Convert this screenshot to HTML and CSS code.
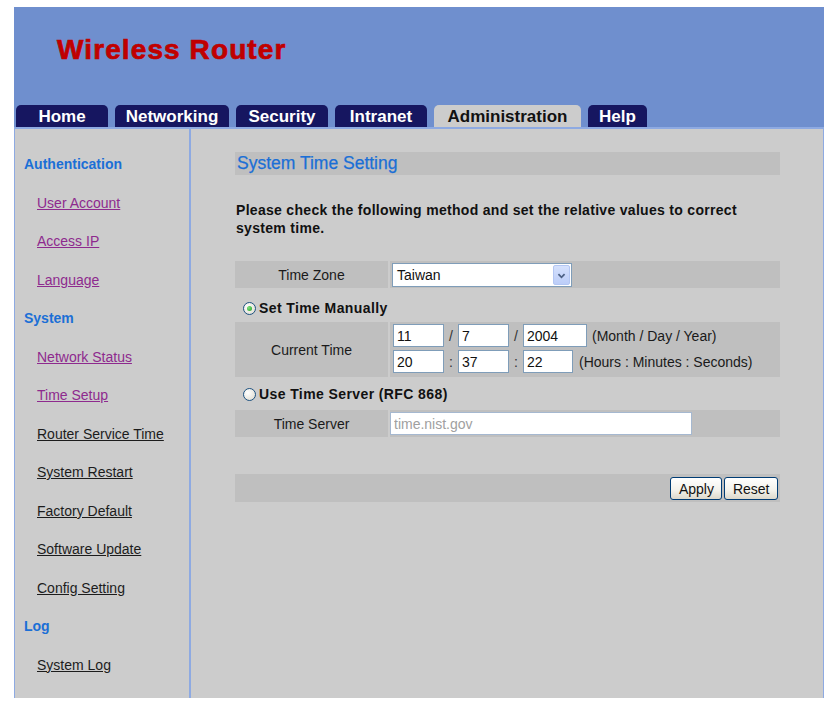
FILE: index.html
```html
<!DOCTYPE html>
<html lang="en">
<head>
<meta charset="utf-8">
<title>Wireless Router - System Time Setting</title>
<link rel="stylesheet" href="styles.css">
</head>
<body>
<div class="frame">
  <header class="header">
    <div class="brand">Wireless Router</div>
    <nav class="tabs">
      <a class="tab">Home</a>
      <a class="tab tab--wide">Networking</a>
      <a class="tab">Security</a>
      <a class="tab">Intranet</a>
      <a class="tab tab--admin tab--active">Administration</a>
      <a class="tab tab--help">Help</a>
    </nav>
  </header>
  <div class="body">
    <aside class="sidebar">
      <div class="nav-head">Authentication</div>
      <div class="nav-item"><a class="nav-link nav-link--visited">User Account</a></div>
      <div class="nav-item"><a class="nav-link nav-link--visited">Access IP</a></div>
      <div class="nav-item"><a class="nav-link nav-link--visited">Language</a></div>
      <div class="nav-head">System</div>
      <div class="nav-item"><a class="nav-link nav-link--visited">Network Status</a></div>
      <div class="nav-item"><a class="nav-link nav-link--visited">Time Setup</a></div>
      <div class="nav-item"><a class="nav-link">Router Service Time</a></div>
      <div class="nav-item"><a class="nav-link">System Restart</a></div>
      <div class="nav-item"><a class="nav-link">Factory Default</a></div>
      <div class="nav-item"><a class="nav-link">Software Update</a></div>
      <div class="nav-item"><a class="nav-link">Config Setting</a></div>
      <div class="nav-head">Log</div>
      <div class="nav-item"><a class="nav-link">System Log</a></div>
    </aside>
    <main class="main">
      <h1 class="section-title">System Time Setting</h1>
      <p class="intro">Please check the following method and set the relative values to correct system time.</p>

      <div class="form-row row-zone">
        <div class="label-cell">Time Zone</div>
        <div class="value-cell">
          <div class="select">
            <span class="select-text">Taiwan</span>
            <span class="select-btn">
              <svg width="17" height="21" viewBox="0 0 17 21"><path d="M5 9 L8.5 12.5 L12 9" fill="none" stroke="#4d6185" stroke-width="2"/></svg>
            </span>
          </div>
        </div>
      </div>

      <div class="radio-line radio-line--first"><span class="radio radio--on"></span>Set Time Manually</div>

      <div class="form-row row-time">
        <div class="label-cell">Current Time</div>
        <div class="value-cell value-cell--stack">
          <div class="time-line">
            <input class="field" type="text" value="11"><span class="sep">/</span><input class="field" type="text" value="7"><span class="sep">/</span><input class="field field--year" type="text" value="2004"><span class="hint">(Month / Day / Year)</span>
          </div>
          <div class="time-line">
            <input class="field" type="text" value="20"><span class="sep">:</span><input class="field" type="text" value="37"><span class="sep">:</span><input class="field field--sec" type="text" value="22"><span class="hint hint--time">(Hours : Minutes : Seconds)</span>
          </div>
        </div>
      </div>

      <div class="radio-line radio-line--second"><span class="radio"></span>Use Time Server (RFC 868)</div>

      <div class="form-row row-server">
        <div class="label-cell">Time Server</div>
        <div class="value-cell">
          <input class="field field--server" type="text" value="time.nist.gov" disabled>
        </div>
      </div>

      <div class="button-bar">
        <button class="btn" type="button">Apply</button>
        <button class="btn" type="button">Reset</button>
      </div>
    </main>
  </div>
</div>
</body>
</html>
```

FILE: styles.css
```css
body {
  margin: 0;
  background: #ffffff;
  font-family: "Liberation Sans", Arial, sans-serif;
}

.frame {
  margin: 7px 0 0 14px;
  width: 810px;
}

/* Header */
.header {
  height: 120px;
  background: #6f8fce;
  display: flex;
  flex-direction: column;
}

.brand {
  margin: 27px 0 0 43px;
  font-size: 28px;
  line-height: 32px;
  font-weight: bold;
  color: #c00000;
  letter-spacing: 1.1px;
  -webkit-text-stroke: 0.7px #c00000;
}

.tabs {
  margin-top: auto;
  display: flex;
  gap: 7px;
  padding-left: 2px;
  height: 22px;
}

.tab {
  width: 92px;
  height: 22px;
  box-sizing: border-box;
  padding-top: 2px;
  line-height: 20px;
  text-align: center;
  background: #161660;
  color: #ffffff;
  font-size: 17px;
  font-weight: bold;
  border-radius: 5px 5px 0 0;
  text-decoration: none;
}

.tab--wide { width: 114px; }
.tab--admin { width: 147px; }
.tab--help { width: 59px; }

.tab--active {
  background: #cccccc;
  color: #111111;
}

/* Body */
.body {
  display: flex;
  height: 569px;
  border-top: 2px solid #8eaae2;
}

.sidebar {
  width: 174px;
  background: #cccccc;
  border-left: 1px solid #8eaae2;
  border-right: 2px solid #8eaae2;
  padding-top: 16px;
}

.nav-head {
  height: 38.5px;
  line-height: 38.5px;
  padding-left: 9px;
  font-size: 14px;
  font-weight: bold;
  color: #1b6fd6;
}

.nav-item {
  height: 38.5px;
  line-height: 38.5px;
  padding-left: 22px;
  font-size: 14px;
}

.nav-link {
  color: #1c1c1c;
  text-decoration: underline;
}

.nav-link--visited {
  color: #8e2a8e;
}

.main {
  flex: 1;
  background: #cccccc;
  border-right: 1px solid #8eaae2;
  padding: 23px 43px 0 44px;
}

.section-title {
  margin: 0;
  height: 23px;
  line-height: 23px;
  padding-left: 2px;
  background: #bfbfbf;
  color: #1b6fd6;
  font-size: 17.5px;
  font-weight: normal;
  -webkit-text-stroke: 0.25px #1b6fd6;
}

.intro {
  margin: 26px 0 0;
  padding-left: 1px;
  font-size: 14px;
  line-height: 18px;
  font-weight: bold;
  letter-spacing: 0.3px;
  color: #111111;
}

/* Form rows */
.form-row {
  display: grid;
  grid-template-columns: 153px 1fr;
  column-gap: 2px;
}

.label-cell {
  background: #bfbfbf;
  display: flex;
  align-items: center;
  justify-content: center;
  font-size: 14px;
  color: #1a1a1a;
}

.value-cell {
  background: #bfbfbf;
  display: flex;
  align-items: flex-start;
  padding: 2px 0 0 2px;
}

.row-zone {
  margin-top: 24px;
  height: 27px;
}

.row-time {
  height: 55px;
}

.row-server {
  height: 27px;
}

.row-server .value-cell {
  padding-top: 2px;
  padding-left: 0;
}

.value-cell--stack {
  flex-direction: column;
  gap: 3px;
  padding-left: 3px;
}

.select {
  width: 180px;
  height: 24px;
  box-sizing: border-box;
  border: 1px solid #7f9db9;
  background: #ffffff;
  display: flex;
  align-items: center;
  justify-content: space-between;
  padding: 0 1px 0 4px;
}

.select-text {
  font-size: 14px;
  color: #111111;
}

.select-btn {
  width: 17px;
  height: 20px;
  box-sizing: border-box;
  border: 1px solid #b3c6f3;
  border-radius: 2px;
  background: linear-gradient(#d5e1fd, #bccdf8);
  display: flex;
  align-items: center;
  justify-content: center;
  overflow: hidden;
}

.radio-line {
  display: flex;
  align-items: center;
  height: 20px;
  padding-left: 8px;
  font-size: 14px;
  font-weight: bold;
  letter-spacing: 0.4px;
  color: #111111;
}

.radio-line--first {
  margin: 10px 0 4px;
}

.radio-line--second {
  margin: 7px 0 6px;
}

.radio {
  position: relative;
  width: 13px;
  height: 13px;
  box-sizing: border-box;
  border: 1px solid #1c5180;
  border-radius: 50%;
  background: radial-gradient(circle at 35% 35%, #ffffff, #dcd9cc);
  margin-right: 3px;
  flex: none;
}

.radio--on::after {
  content: "";
  position: absolute;
  left: 3px;
  top: 3px;
  width: 5px;
  height: 5px;
  border-radius: 50%;
  background: radial-gradient(circle at 35% 35%, #7ee07e, #21a121);
}

.time-line {
  display: flex;
  align-items: center;
  height: 23px;
}

.field {
  width: 51px;
  height: 23px;
  box-sizing: border-box;
  border: 1px solid #7f9db9;
  background: #ffffff;
  padding: 0 3px;
  margin: 0;
  font-family: "Liberation Sans", Arial, sans-serif;
  font-size: 14px;
  color: #111111;
  outline: none;
}

.field--year { width: 64px; }
.field--sec { width: 50px; }

.field--server {
  width: 302px;
  color: #a0a0a0;
  background: #ffffff;
  border-color: #a5b8d0;
}

.sep {
  width: 14px;
  text-align: center;
  font-size: 14px;
  color: #333333;
}

.hint {
  margin-left: 5px;
  font-size: 14px;
  color: #1a1a1a;
}

.hint--time {
  margin-left: 6px;
}

.button-bar {
  margin-top: 37px;
  height: 28px;
  box-sizing: border-box;
  background: #bfbfbf;
  display: flex;
  justify-content: flex-end;
  align-items: flex-start;
  gap: 2px;
  padding: 3px 2px 0 0;
}

.btn {
  height: 23px;
  box-sizing: border-box;
  border: 1px solid #003c74;
  border-radius: 3px;
  background: linear-gradient(#ffffff, #f2f1ea 60%, #dcd8cb);
  padding: 0 7.5px;
  font-family: "Liberation Sans", Arial, sans-serif;
  font-size: 14px;
  color: #111111;
}
```
